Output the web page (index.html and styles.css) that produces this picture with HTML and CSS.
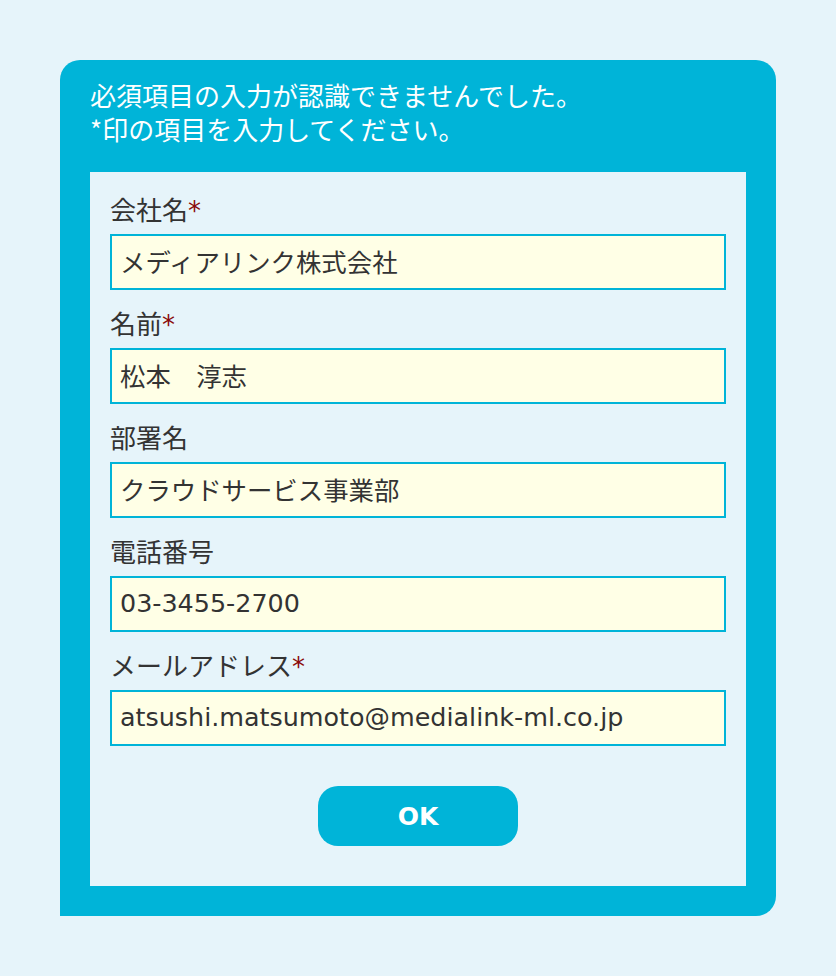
FILE: index.html
```html
<!DOCTYPE html>
<html lang="ja">
<head>
<meta charset="utf-8">
<title>入力エラー</title>
<link rel="stylesheet" href="styles.css">
</head>
<body>
<div class="dialog">
  <div class="dialog-header">
    <p class="msg">必須項目の入力が認識できませんでした。</p>
    <p class="msg">*印の項目を入力してください。</p>
  </div>
  <form class="dialog-body">
    <div class="field">
      <label class="field-label">会社名<span class="req">*</span></label>
      <input class="field-input" type="text" value="メディアリンク株式会社">
    </div>
    <div class="field">
      <label class="field-label">名前<span class="req">*</span></label>
      <input class="field-input" type="text" value="松本　淳志">
    </div>
    <div class="field">
      <label class="field-label">部署名</label>
      <input class="field-input" type="text" value="クラウドサービス事業部">
    </div>
    <div class="field">
      <label class="field-label">電話番号</label>
      <input class="field-input" type="text" value="03-3455-2700">
    </div>
    <div class="field">
      <label class="field-label">メールアドレス<span class="req">*</span></label>
      <input class="field-input" type="text" value="atsushi.matsumoto@medialink-ml.co.jp">
    </div>
    <div class="actions">
      <button class="ok-btn" type="button">OK</button>
    </div>
  </form>
</div>
</body>
</html>
```

FILE: styles.css
```css
html, body {
  margin: 0;
  padding: 0;
}
body {
  background: #e6f4fa;
  font-family: "DejaVu Sans", "Noto Sans CJK JP", sans-serif;
  color: #333333;
  padding: 60px 60px 0 60px;
  min-height: 976px;
  box-sizing: border-box;
}
.dialog {
  width: 716px;
  background: #00b4d8;
  border-radius: 20px 20px 20px 0;
  padding: 0 30px 30px 30px;
  box-sizing: border-box;
}
.dialog-header {
  padding: 18px 0 26px 0;
}
.msg {
  margin: 0;
  color: #ffffff;
  font-size: 26px;
  line-height: 34px;
  font-family: "Noto Sans CJK JP", "DejaVu Sans", sans-serif;
}
.dialog-body {
  margin: 0;
  background: #e6f4fa;
  padding: 20px 20px 40px 20px;
  display: flex;
  flex-direction: column;
  gap: 16px;
}
.field {
  display: flex;
  flex-direction: column;
  gap: 8px;
}
.field-label {
  font-size: 26px;
  line-height: 34px;
  height: 34px;
  color: #333333;
  font-family: "Noto Sans CJK JP", "DejaVu Sans", sans-serif;
}
.req {
  color: #8b0a0a;
  font-family: "DejaVu Sans", sans-serif;
}
.field-input {
  display: block;
  width: 616px;
  height: 56px;
  box-sizing: border-box;
  margin: 0;
  border: 2px solid #00b4d8;
  border-radius: 0;
  background: #ffffe6;
  padding: 0 8px 2px 8px;
  font-family: "DejaVu Sans", "Noto Sans CJK JP", sans-serif;
  font-size: 25.4px;
  line-height: 50px;
  color: #333333;
  outline: none;
}
.actions {
  display: flex;
  justify-content: center;
  margin-top: 24px;
}
.ok-btn {
  width: 200px;
  height: 60px;
  border: none;
  border-radius: 20px;
  background: #00b4d8;
  color: #ffffff;
  font-family: "DejaVu Sans", sans-serif;
  font-weight: bold;
  font-size: 25px;
  padding: 0;
  cursor: pointer;
}
```
